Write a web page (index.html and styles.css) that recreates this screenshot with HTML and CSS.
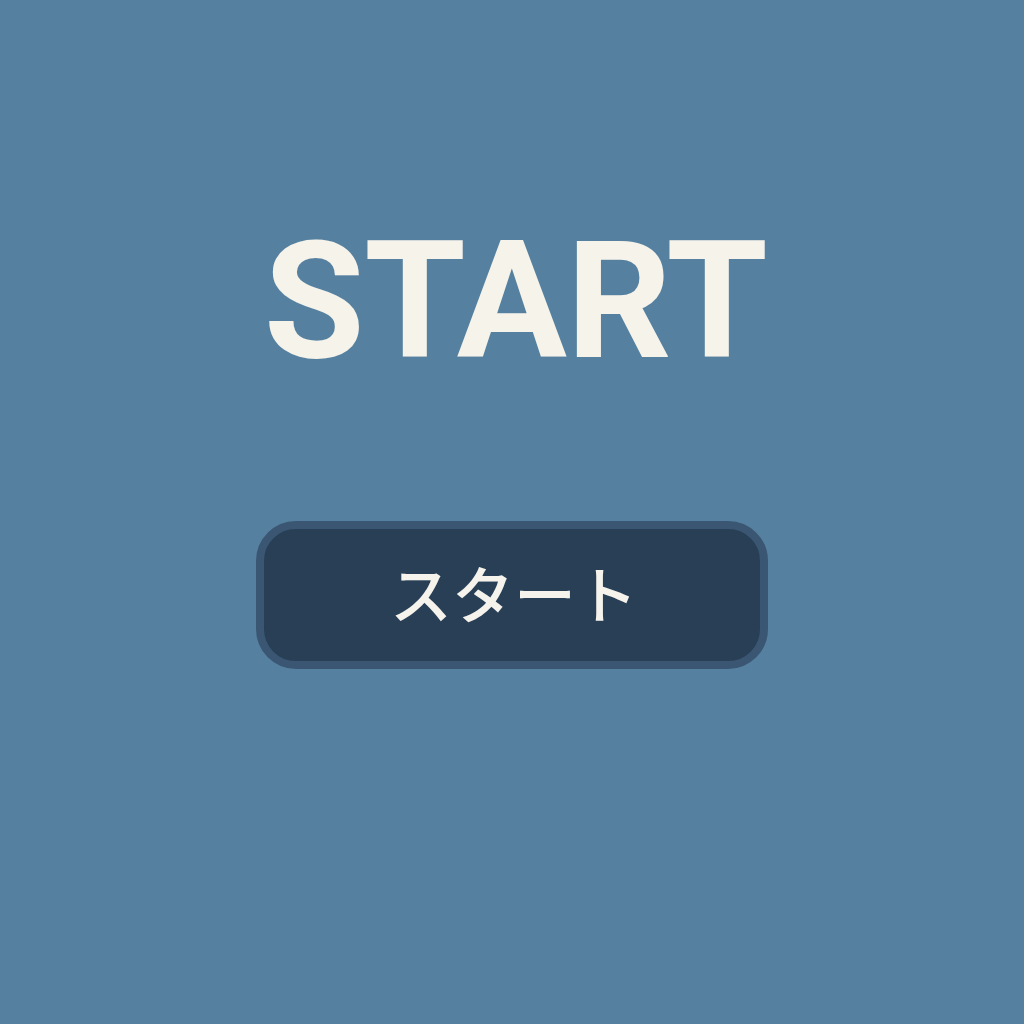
FILE: index.html
```html
<!DOCTYPE html>
<html lang="ja">
<head>
<meta charset="utf-8">
<title>START</title>
<link rel="stylesheet" href="styles.css">
</head>
<body>
<main class="screen">
  <h1 class="title">START</h1>
  <button class="start-btn" type="button">スタート</button>
</main>
</body>
</html>
```

FILE: styles.css
```css
html, body {
  margin: 0;
  padding: 0;
}
body {
  background: #5580a0;
  width: 1024px;
  height: 1024px;
  overflow: hidden;
}
.screen {
  display: flex;
  flex-direction: column;
  align-items: center;
  padding-top: 219px;
}
.title {
  margin: 0;
  padding-left: 7px;
  font-family: Roboto, "Liberation Sans", sans-serif;
  font-weight: 700;
  font-size: 164px;
  line-height: 1;
  height: 166px;
  color: #f6f3ea;
  letter-spacing: -0.5px;
}
.start-btn {
  margin-top: 136px;
  box-sizing: border-box;
  width: 512px;
  height: 148px;
  border: 8px solid #3a5672;
  border-radius: 40px;
  background: #283f55;
  color: #f5f3ec;
  font-family: "Noto Sans CJK JP", "Noto Sans", sans-serif;
  font-weight: 500;
  font-size: 62px;
  line-height: 1;
  padding: 0 0 6px 4px;
  display: flex;
  align-items: center;
  justify-content: center;
}
```
